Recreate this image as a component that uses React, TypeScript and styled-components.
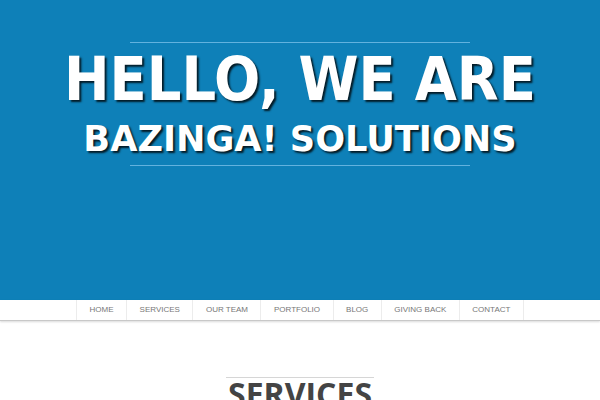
import React from 'react';
import styled, { createGlobalStyle } from 'styled-components';

const GlobalStyle = createGlobalStyle`
  html, body {
    margin: 0;
    padding: 0;
    background: #ffffff;
  }
  body {
    font-family: "Liberation Sans", Arial, sans-serif;
  }
`;

const Page = styled.div`
  width: 600px;
  height: 400px;
  overflow: hidden;
`;

const Hero = styled.header`
  height: 300px;
  background: #0e80b8;
  display: flex;
  flex-direction: column;
  align-items: center;
  padding-top: 42px;
  box-sizing: border-box;
`;

const Rule = styled.div`
  width: 340px;
  height: 1px;
  background: #62b2de;
`;

const Title = styled.h1`
  margin: 0;
  padding: 3px 0 5px;
  text-align: center;
  font-weight: bold;
  color: #ffffff;
  text-shadow: 2px 2px 2px rgba(0, 0, 0, 0.8);
`;

const Headline = styled.span`
  display: block;
  font-family: "DejaVu Sans Condensed", "DejaVu Sans", sans-serif;
  font-size: 60.5px;
  line-height: 67px;
`;

const Subline = styled.span`
  display: block;
  margin-top: 5px;
  font-family: "DejaVu Sans", sans-serif;
  font-size: 35.2px;
  line-height: 42px;
`;

const Nav = styled.nav`
  height: 20px;
  background: #ffffff;
  border-bottom: 1px solid #c8c8c8;
  box-shadow: 0 1px 2px rgba(0, 0, 0, 0.15);
  display: flex;
  justify-content: center;
`;

const NavList = styled.ul`
  list-style: none;
  margin: 0;
  padding: 0;
  display: flex;
  border-left: 1px solid #ececec;
`;

const NavItem = styled.li`
  border-right: 1px solid #ececec;
  padding: 0 12.5px;
  font-size: 8px;
  line-height: 20px;
  color: #777777;
`;

const Section = styled.section`
  display: flex;
  flex-direction: column;
  align-items: center;
  padding-top: 56px;
`;

const SectionRule = styled.div`
  width: 148px;
  height: 1px;
  background: #d6d6d6;
`;

const SectionTitle = styled.h2`
  margin: 0;
  font-family: "Open Sans", sans-serif;
  font-weight: bold;
  font-size: 32px;
  line-height: 1;
  color: #444444;
`;

const links = ['HOME', 'SERVICES', 'OUR TEAM', 'PORTFOLIO', 'BLOG', 'GIVING BACK', 'CONTACT'];

const App: React.FC = () => {
  return (
    <Page>
      <GlobalStyle />
      <Hero>
        <Rule />
        <Title>
          <Headline>HELLO, WE ARE</Headline>
          <Subline>BAZINGA! SOLUTIONS</Subline>
        </Title>
        <Rule />
      </Hero>
      <Nav>
        <NavList>
          {links.map((l) => (
            <NavItem key={l}>{l}</NavItem>
          ))}
        </NavList>
      </Nav>
      <Section>
        <SectionRule />
        <SectionTitle>SERVICES</SectionTitle>
      </Section>
    </Page>
  );
};

export default App;
